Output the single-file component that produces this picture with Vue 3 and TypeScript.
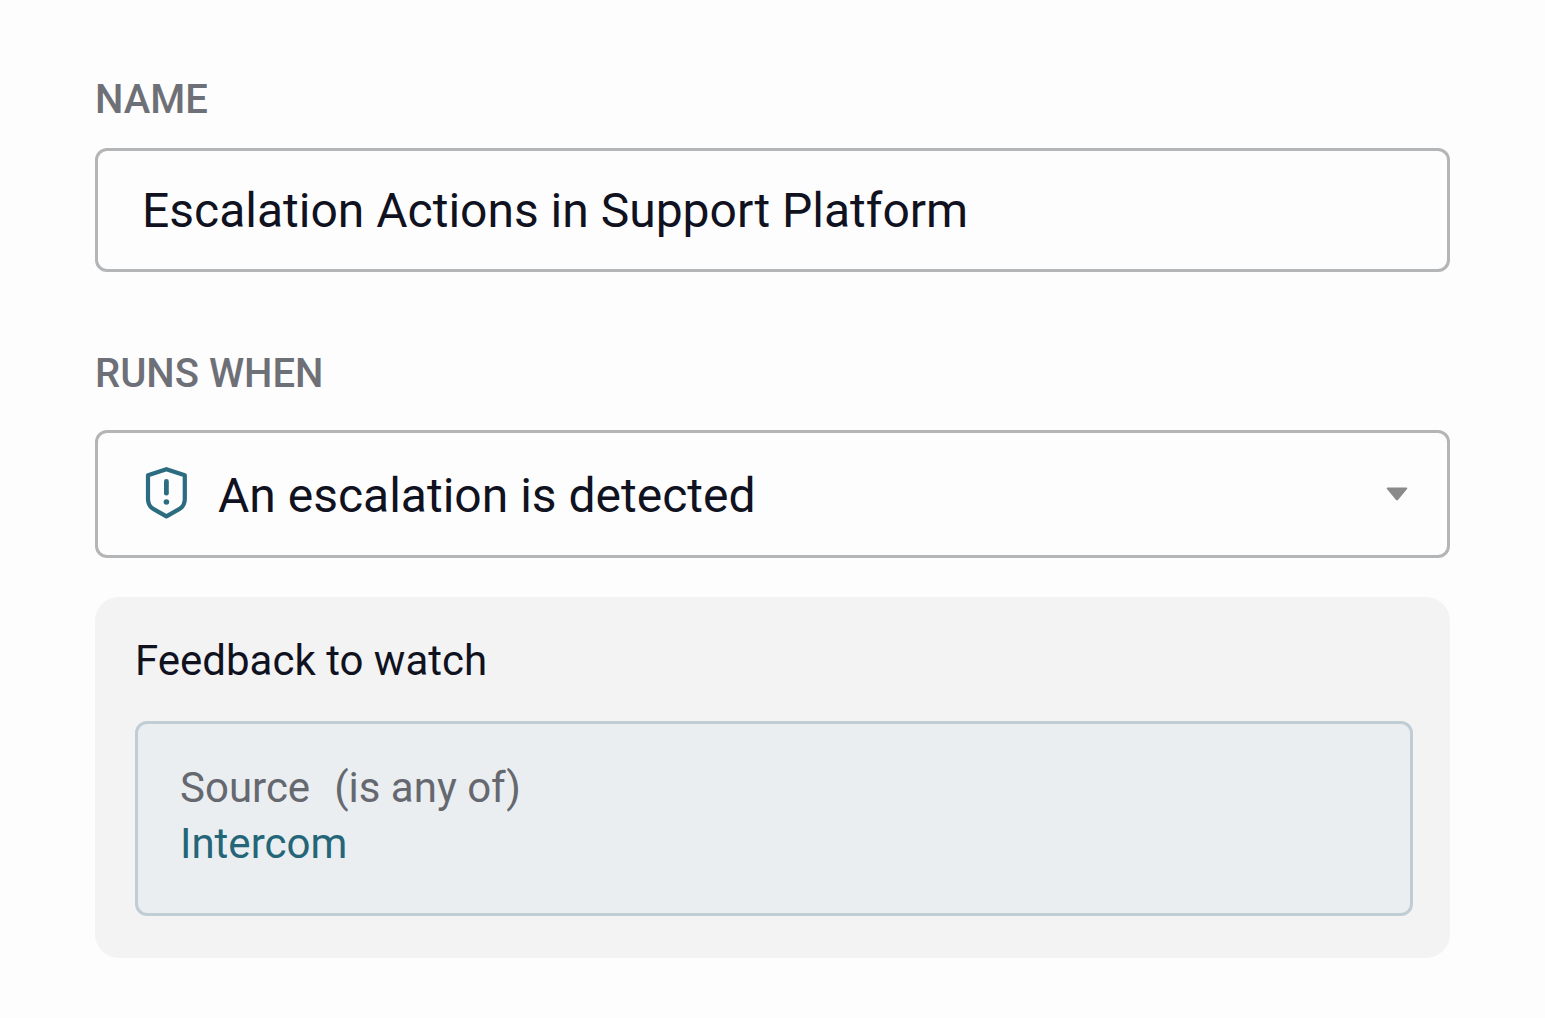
<script setup lang="ts">
import { ref } from 'vue'

interface Trigger {
  value: string
  label: string
}

interface Filter {
  field: string
  operator: string
  value: string
}

const name = ref('Escalation Actions in Support Platform')
const triggers: Trigger[] = [{ value: 'escalation', label: 'An escalation is detected' }]
const trigger = ref('escalation')
const filters: Filter[] = [{ field: 'Source', operator: '(is any of)', value: 'Intercom' }]
</script>

<template>
  <form class="form" @submit.prevent>
    <div class="field">
      <label class="label" for="name">NAME</label>
      <input id="name" v-model="name" class="control" type="text" />
    </div>

    <div class="field trigger-field">
      <label class="label" for="trigger">RUNS WHEN</label>
      <div class="select-wrap">
        <select id="trigger" v-model="trigger" class="control select">
          <option v-for="t in triggers" :key="t.value" :value="t.value">{{ t.label }}</option>
        </select>
        <svg class="shield" viewBox="0 0 44 54" fill="none" stroke="#2b6c80" stroke-linejoin="round" stroke-linecap="round" aria-hidden="true">
          <path d="M22.4 2.2 L40.8 8.2 V32 C40.8 36.6 39.4 39.4 36 41.6 L22.4 49.4 L8.8 41.6 C5.4 39.4 4 36.6 4 32 V8.2 Z" stroke-width="4.2" />
          <path d="M22.4 14.4 V26.2" stroke-width="4.8" />
          <circle cx="22.4" cy="35" r="2.8" fill="#2b6c80" stroke="none" />
        </svg>
        <svg class="caret" viewBox="0 0 22 14" aria-hidden="true">
          <path d="M1.5 0.5 H20.5 Q22 0.5 21 2 L12.2 12.7 Q11 14 9.8 12.7 L1 2 Q0 0.5 1.5 0.5 Z" fill="#8a8a8b" />
        </svg>
      </div>
    </div>

    <section class="panel" aria-labelledby="panel-title">
      <h2 id="panel-title" class="panel-title">Feedback to watch</h2>
      <div v-for="f in filters" :key="f.field" class="filter">
        <div class="condition">
          <span>{{ f.field }}</span>
          <span>{{ f.operator }}</span>
        </div>
        <div class="value">{{ f.value }}</div>
      </div>
    </section>
  </form>
</template>

<style>
body {
  margin: 0;
  background: #fdfdfd;
}
</style>

<style scoped>
.form {
  display: flex;
  flex-direction: column;
  padding: 76px 95px 60px;
  color: #10121f;
  font-family: Roboto, "Liberation Sans", sans-serif;
}

.field {
  display: flex;
  flex-direction: column;
  gap: 24px;
}

.trigger-field {
  margin-top: 78px;
  gap: 32px;
}

.label {
  color: #6e7077;
  font-size: 40px;
  font-weight: 500;
  line-height: 48px;
}

.control {
  box-sizing: border-box;
  width: 100%;
  height: 124px;
  margin: 0;
  padding: 30px 44px;
  border: 3px solid #b4b5b6;
  border-radius: 12px;
  outline: none;
  background: #fdfdfd;
  color: inherit;
  font-family: inherit;
  font-size: 48px;
  line-height: 60px;
}

.select-wrap {
  display: grid;
  align-items: center;
}

.select-wrap > * {
  grid-area: 1 / 1;
}

.select {
  height: 128px;
  padding: 32px 44px 28px 120px;
  appearance: none;
}

.shield {
  width: 44px;
  height: 54px;
  margin-left: 49px;
  pointer-events: none;
}

.caret {
  justify-self: end;
  width: 22px;
  height: 14px;
  margin-right: 42px;
  pointer-events: none;
}

.panel {
  margin-top: 39px;
  padding: 38px 37px 42px 40px;
  border-radius: 24px;
  background: #f3f3f4;
}

.panel-title {
  margin: 0 0 34px;
  font-size: 42px;
  font-weight: 400;
  line-height: 52px;
}

.filter {
  padding: 36px 42px 41px;
  border: 3px solid #c0cdd4;
  border-radius: 12px;
  background: #eaeef1;
  font-size: 42px;
  line-height: 56px;
}

.condition {
  display: flex;
  gap: 24px;
  color: #66686f;
}

.value {
  color: #246678;
}
</style>
